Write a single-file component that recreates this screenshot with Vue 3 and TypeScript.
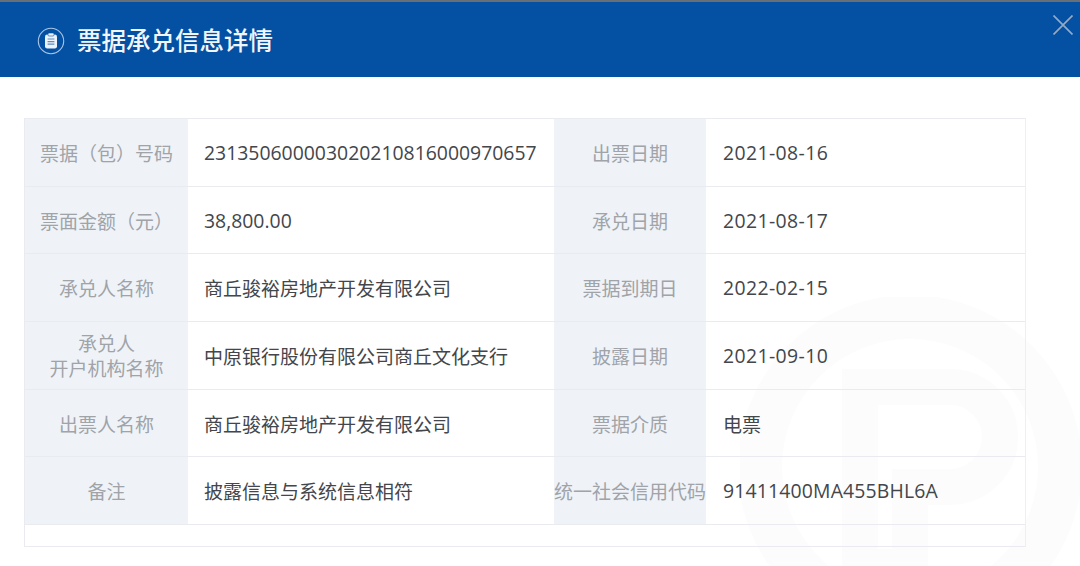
<script setup lang="ts">
interface Cell {
  text: string
  kind?: 'num' | 'date' | 'code'
}
interface Row {
  l1: string
  v1: Cell
  l2: string
  v2: Cell
}
const rows: Row[] = [
  { l1: '票据（包）号码', v1: { text: '231350600003020210816000970657', kind: 'num' }, l2: '出票日期', v2: { text: '2021-08-16', kind: 'date' } },
  { l1: '票面金额（元）', v1: { text: '38,800.00', kind: 'num' }, l2: '承兑日期', v2: { text: '2021-08-17', kind: 'date' } },
  { l1: '承兑人名称', v1: { text: '商丘骏裕房地产开发有限公司' }, l2: '票据到期日', v2: { text: '2022-02-15', kind: 'date' } },
  { l1: '承兑人\n开户机构名称', v1: { text: '中原银行股份有限公司商丘文化支行' }, l2: '披露日期', v2: { text: '2021-09-10', kind: 'date' } },
  { l1: '出票人名称', v1: { text: '商丘骏裕房地产开发有限公司' }, l2: '票据介质', v2: { text: '电票' } },
  { l1: '备注', v1: { text: '披露信息与系统信息相符' }, l2: '统一社会信用代码', v2: { text: '91411400MA455BHL6A', kind: 'code' } },
]
</script>

<template>
  <div class="page">
    <header class="head">
      <svg class="badge" width="28" height="28" viewBox="0 0 28 28" fill="none">
        <circle cx="14" cy="14" r="12.7" stroke="#a9c5e4" stroke-width="1.1" />
        <rect x="8" y="7.5" width="12" height="14" rx="2.2" fill="#eef3f9" />
        <rect x="11" y="6" width="6" height="3" rx="1" fill="#eef3f9" stroke="#0450a3" stroke-width=".6" />
        <path d="M10.6 12h6.8M10.6 14.6h6.8M10.6 17.2h6.8" stroke="#5f8cbf" stroke-width="1.2" />
      </svg>
      <h1 class="title">票据承兑信息详情</h1>
      <svg class="close" width="20" height="20" viewBox="0 0 20 20" fill="none">
        <path d="M.5.5l19 19M19.5.5l-19 19" stroke="#93a9c4" stroke-width="1.7" />
      </svg>
    </header>
    <main class="body">
      <svg class="mark" width="340" height="340" viewBox="0 0 340 340" fill="none">
        <circle cx="170" cy="170" r="150" stroke="#fcfcfd" stroke-width="44" />
        <path d="M120 90h90a50 50 0 0 1 0 100h-40v80h-50z" stroke="#fcfcfd" stroke-width="36" />
      </svg>
      <section class="table">
        <div v-for="r in rows" :key="r.l1" class="row">
          <div class="label">{{ r.l1 }}</div>
          <div class="value" :class="r.v1.kind">{{ r.v1.text }}</div>
          <div class="label">{{ r.l2 }}</div>
          <div class="value end" :class="r.v2.kind">{{ r.v2.text }}</div>
        </div>
        <div class="foot"></div>
      </section>
    </main>
  </div>
</template>

<style>
html, body { margin: 0; background: #fff; }
</style>

<style scoped>
.page {
  width: 1080px;
  height: 566px;
  overflow: hidden;
  background: #fff;
  font-family: "Noto Sans CJK SC", sans-serif;
}
.head {
  height: 75px;
  border-top: 2px solid #6a6f75;
  background: #0450a3;
  display: flex;
  align-items: center;
  padding-left: 37px;
  padding-right: 7px;
  color: #f1f6fb;
}
.badge {
  flex: none;
  margin-top: 3px;
}
.title {
  margin: 0 0 0 12px;
  font-size: 24.5px;
  line-height: 32px;
  font-weight: 500;
  flex: 1;
}
.close {
  flex: none;
  align-self: flex-start;
  margin-top: 13px;
}
.body {
  position: relative;
  height: 489px;
  padding: 41px 0 0 24px;
  box-sizing: border-box;
}
.mark {
  position: absolute;
  left: 740px;
  top: 220px;
}
.table {
  position: relative;
  width: 1002px;
  box-sizing: border-box;
  border: 1px solid #e9ebf0;
  border-right-color: #eeeff3;
}
.row {
  display: grid;
  grid-template-columns: 163px 366px 152px 1fr;
  height: 67.7px;
  box-sizing: border-box;
  border-bottom: 1px solid #e9ebf0;
}
.label {
  background: #eff3f8;
  color: #a0a3a8;
  font-size: 19px;
  line-height: 25px;
  box-sizing: border-box;
  display: flex;
  align-items: center;
  justify-content: center;
  text-align: center;
  white-space: pre-line;
}
.value {
  color: #43464b;
  font-size: 19px;
  display: flex;
  align-items: center;
  padding-left: 16px;
  white-space: nowrap;
}
.value.end { padding-left: 17px; }
.value.num,
.value.date,
.value.code {
  font-family: "Open Sans", "Noto Sans CJK SC", sans-serif;
  font-size: 19.4px;
}
.value.date { letter-spacing: 0.4px; }
.value.code { letter-spacing: 0.17px; }
.foot { height: 21px; }
</style>
